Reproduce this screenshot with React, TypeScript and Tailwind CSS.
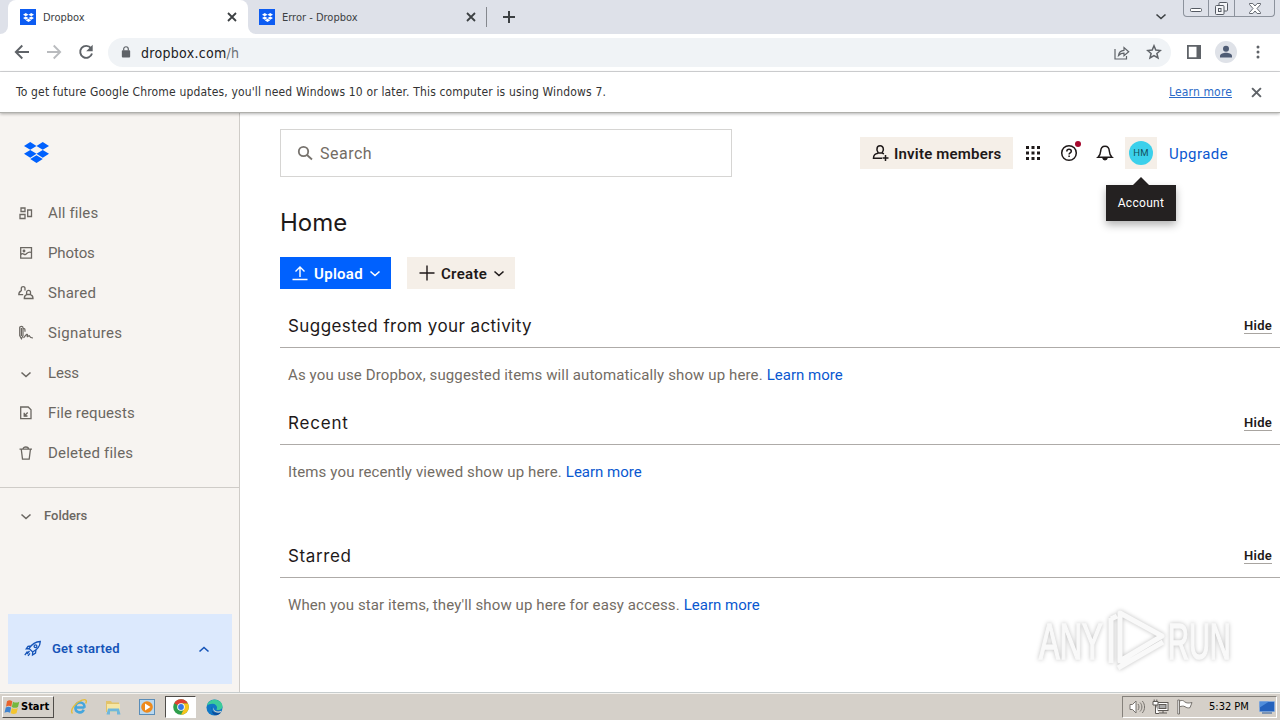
import React from "react";
import clsx from "clsx";

interface IconProps {
  className?: string;
}

interface NavItem {
  label: string;
  icon: React.ReactNode;
  tracking: string;
}

interface Section {
  title: string;
  text: string;
  titleClass: string;
  textClass: string;
  gap: string;
}

const DropboxGlyph = ({ className }: IconProps) => (
  <svg viewBox="0 0 24 20.4" className={className} fill="currentColor" preserveAspectRatio="none">
    <path d="M6 0 0 3.8l6 3.8 6-3.8zM18 0l-6 3.8 6 3.8 6-3.8zM0 11.5l6 3.8 6-3.8-6-3.8zM18 7.7l-6 3.8 6 3.8 6-3.8zM6 16.6l6 3.8 6-3.8-6-3.8z" />
  </svg>
);

const Chevron = ({ className }: IconProps) => (
  <svg viewBox="0 0 12 8" className={className} fill="none" stroke="currentColor" strokeWidth="1.6">
    <path d="m1.5 1.5 4.5 4 4.5-4" />
  </svg>
);

const Cross = ({ className }: IconProps) => (
  <svg viewBox="0 0 10 10" className={className} fill="none" stroke="currentColor" strokeWidth="1.8">
    <path d="m1 1 8 8M9 1 1 9" />
  </svg>
);

const navSvg = "h-4 w-4 shrink-0";

const navItems: NavItem[] = [
  {
    label: "All files",
    tracking: "tracking-[0.15px]",
    icon: (
      <svg viewBox="0 0 16 16" className={navSvg} fill="none" stroke="currentColor" strokeWidth="1.3">
        <path d="M3 3h4v3.500H3zM2 9.500h5v4H2zM9.700 5h3.800v6.500H9.700z" />
      </svg>
    ),
  },
  {
    label: "Photos",
    tracking: "-tracking-[0.1px]",
    icon: (
      <svg viewBox="0 0 16 16" className={navSvg} fill="none" stroke="currentColor" strokeWidth="1.3">
        <path d="M2.700 2.700h10.800v10.500H2.700zM3 9.500c2-2.500 3 .8 4.500 0s2.500-3.500 6-2" />
        <circle cx="6" cy="6" r=".8" fill="currentColor" />
      </svg>
    ),
  },
  {
    label: "Shared",
    tracking: "tracking-[0.25px]",
    icon: (
      <svg viewBox="0 0 16 16" className={navSvg} fill="none" stroke="currentColor" strokeWidth="1.3">
        <path d="M3.300 6V3.500c0-2.500 3.700-2.500 3.700 0v2M3.300 6C1.500 6.500.8 7.500.8 9.700h4.400M8.600 9.500V7.300c0-2.500 3.900-2.500 3.900 0v2.200zM8.600 9.700C7 10.300 6.300 11.300 6.300 13.500h8.700c0-2.200-.7-3.200-2.500-3.800" />
      </svg>
    ),
  },
  {
    label: "Signatures",
    tracking: "tracking-[0.3px]",
    icon: (
      <svg viewBox="0 0 16 16" className={navSvg} fill="none" stroke="currentColor" strokeWidth="1.2">
        <path d="M1.700 2.500C1.700 1 5 1 5 2.500v8L3.400 13.700 1.700 10.500zM3.400 3v8M5.300 3.700c1.700-.5 1.700.5 1.700 3M5.500 13c3-4 4.500-5 3.800-2-.4 1.800 1.500-.8 2-.3.500.5.300 2.300 3.700 2.300" />
      </svg>
    ),
  },
  {
    label: "Less",
    tracking: "tracking-[-0.2px]",
    icon: (
      <span className="flex h-4 w-4 items-center justify-center pt-[3px]">
        <Chevron className="h-[8px] w-[12px]" />
      </span>
    ),
  },
  {
    label: "File requests",
    tracking: "tracking-[0.12px]",
    icon: (
      <svg viewBox="0 0 16 16" className={navSvg} fill="none" stroke="currentColor" strokeWidth="1.3">
        <path d="M2.700 2h7.500l2.800 2.800v8.900H2.700zM9.700 7.500 6.500 10.700M6.200 7.700V11h3.300" />
        <path d="M6 8v3.200h3.200z" fill="currentColor" stroke="none" />
      </svg>
    ),
  },
  {
    label: "Deleted files",
    tracking: "tracking-[0.2px]",
    icon: (
      <svg viewBox="0 0 16 16" className={navSvg} fill="none" stroke="currentColor" strokeWidth="1.3">
        <path d="M1.500 4.200h12.500M5 4c0-2.700 5.500-2.700 5.500 0M3.300 4.500l1.200 9.700h6.700l1.200-9.700" />
      </svg>
    ),
  },
];

const sections: Section[] = [
  {
    title: "Suggested from your activity",
    text: "As you use Dropbox, suggested items will automatically show up here.",
    titleClass: "tracking-[0.42px]",
    textClass: "tracking-[0.12px]",
    gap: "mb-[3px]",
  },
  {
    title: "Recent",
    text: "Items you recently viewed show up here.",
    titleClass: "tracking-[0.8px]",
    textClass: "tracking-[0.13px]",
    gap: "mb-[39px]",
  },
  {
    title: "Starred",
    text: "When you star items, they'll show up here for easy access.",
    titleClass: "tracking-[0.6px]",
    textClass: "tracking-[0.1px]",
    gap: "",
  },
];

const Favicon = () => (
  <span className="flex h-4 w-4 shrink-0 items-center justify-center bg-[#0d5cf2] text-white">
    <DropboxGlyph className="h-[9px] w-[11px]" />
  </span>
);

const TabStrip = () => (
  <div className="flex h-[34px] bg-[#dee1e9] text-[11px] text-[#3c4043]">
    <div className="flex h-[34px] w-2 shrink-0 bg-white">
      <div className="w-full rounded-br-lg bg-[#dee1e9]" />
    </div>
    <div className="flex w-[240px] shrink-0 items-center rounded-t-lg bg-white pl-3">
      <Favicon />
      <span className="ml-[7px] w-[184px] pt-[2px]">Dropbox</span>
      <Cross className="h-[10px] w-[10px]" />
    </div>
    <div className="flex h-[34px] w-2 shrink-0 bg-white">
      <div className="w-full rounded-bl-lg bg-[#dee1e9]" />
    </div>
    <div className="flex w-[230px] shrink-0 items-center pl-[3px]">
      <Favicon />
      <span className="ml-[7px] w-[184px] pt-[2px]">Error - Dropbox</span>
      <Cross className="h-[10px] w-[10px]" />
    </div>
    <div className="mt-[7px] h-5 w-px bg-[#85888e]" />
    <svg viewBox="0 0 12 12" className="mt-[11px] ml-4 h-3 w-3" stroke="#3c4043" strokeWidth="2">
      <path d="M6 0v12M0 6h12" />
    </svg>
    <div className="ml-auto flex pr-[5px]">
      <Chevron className="mt-[13px] mr-[16px] h-[8px] w-[12px]" />
      <div className="flex h-[17px] w-[92px] rounded-b-[4px] border border-t-0 border-[#8c929c] text-[#555a63]">
        <div className="flex w-[25px] items-center justify-center border-r border-[#8c929c]">
          <svg viewBox="0 0 12 4" className="mt-1 h-1 w-3" fill="#fff" stroke="currentColor">
            <rect x=".5" y=".5" width="11" height="3" rx="1" />
          </svg>
        </div>
        <div className="flex w-[26px] items-center justify-center border-r border-[#8c929c]">
          <svg viewBox="0 0 13 13" className="h-[13px] w-[13px]" fill="#f4f5f8" stroke="currentColor">
            <rect x="4" y=".5" width="8.500" height="8.500" rx="1" />
            <rect x=".5" y="3.500" width="8.500" height="9" rx="1" />
            <rect x="3.500" y="6.500" width="2.500" height="3" />
          </svg>
        </div>
        <div className="flex flex-1 items-center justify-center">
          <svg viewBox="0 0 12 11" className="h-[11px] w-3" fill="#fff" stroke="currentColor" strokeWidth=".9">
            <path d="M.5.500h3.300L6 3 8.200.500h3.300v1L8 5.500l3.500 4v1H8.200L6 8l-2.200 2.500H.500v-1L4 5.500l-3.500-4z" />
          </svg>
        </div>
      </div>
    </div>
  </div>
);

const Toolbar = () => (
  <div className="flex h-[38px] items-center border-b border-[#d5d6d8] bg-white text-[#5f6368]">
    <svg viewBox="0 0 16 16" className="mb-px ml-[14px] h-4 w-4" fill="none" stroke="currentColor" strokeWidth="1.9">
      <path d="M15 8H2M8.300 1.500 1.800 8l6.500 6.500" />
    </svg>
    <svg viewBox="0 0 16 16" className="mb-px ml-4 h-4 w-4" fill="none" stroke="#b9bbbe" strokeWidth="1.8">
      <path d="M1 8h13M7.700 1.500 14.200 8l-6.500 6.500" />
    </svg>
    <svg viewBox="0 0 16 16" className="mb-px ml-4 h-4 w-4" fill="none" stroke="currentColor" strokeWidth="1.9">
      <path d="M13 4.200A6 6 0 1 0 14 9.500" />
      <path d="M14.700.8v6.500H8.200z" fill="currentColor" stroke="none" />
    </svg>
    <div className="ml-[14px] flex h-[29px] w-[1063px] items-center rounded-full bg-[#f0f3f6]">
      <svg viewBox="0 0 10 13" className="mb-[2px] ml-[13px] h-[12px] w-[10px]">
        <rect x=".5" y="4.500" width="9" height="8" rx="1" fill="#5f6368" />
        <path d="M2.500 5V3.300a2.500 2.500 0 0 1 5 0V5" fill="none" stroke="#5f6368" strokeWidth="1.300" />
      </svg>
      <span className="ml-[10px] pt-px text-[14px] tracking-[0.3px] text-[#202124]">
        dropbox.com<span className="text-[#6d7176]">/h</span>
      </span>
      <svg viewBox="0 0 16 14" className="ml-auto h-[14px] w-4" fill="none" stroke="currentColor" strokeWidth="1.2">
        <path d="M1 3v10h11.500v-3M4.500 9.500C5 6 7 4.500 10 4.300V1.500l4.700 4.200L10 9.800V7.200C7.500 7.200 6 8 4.500 9.500z" />
      </svg>
      <svg viewBox="0 0 16 16" className="mr-[9px] mb-px ml-4 h-4 w-4" fill="none" stroke="currentColor" strokeWidth="1.500">
        <path d="m8 1.800 1.800 4.300 4.600.4-3.500 3 1.100 4.500L8 11.600 4 14l1.100-4.500-3.500-3 4.600-.4z" />
      </svg>
    </div>
    <svg viewBox="0 0 14 14" className="mb-px ml-4 h-[14px] w-[14px]" fill="none" stroke="currentColor" strokeWidth="1.800">
      <path d="M.9.900h12.200v12.200H.9z" />
      <path d="M9.500 1h4v12h-4z" fill="currentColor" stroke="none" />
    </svg>
    <svg viewBox="0 0 22 22" className="mb-px ml-[14px] h-[22px] w-[22px]">
      <circle cx="11" cy="11" r="11" fill="#dfe2e8" />
      <circle cx="11" cy="7.800" r="3" fill="#4f5c74" />
      <path d="M5 16.500v-1.500c0-2 3.500-3.200 6-3.200s6 1.200 6 3.200v1.500z" fill="#4f5c74" />
    </svg>
    <svg viewBox="0 0 4 14" className="mb-px ml-[19px] h-[14px] w-1" fill="currentColor">
      <circle cx="2" cy="2" r="1.500" />
      <circle cx="2" cy="7" r="1.500" />
      <circle cx="2" cy="12" r="1.500" />
    </svg>
  </div>
);

const InfoBar = () => (
  <div className="relative z-10 flex h-[41px] items-center border-b border-[#b0b0ac] bg-white pl-4 text-[12px] text-[#333] shadow-[0_1px_3px_rgba(0,0,0,0.3)]">
    <span className="tracking-[0.16px] whitespace-nowrap">
      To get future Google Chrome updates, you'll need Windows 10 or later. This computer is using Windows 7.
    </span>
    <a className="mr-[19px] ml-auto tracking-[0.15px] text-[#2a6ac8] underline">Learn more</a>
    <Cross className="mr-[18px] h-[11px] w-[11px] text-[#5f6368]" />
  </div>
);

const Sidebar = () => (
  <aside className="flex w-[240px] shrink-0 flex-col border-r border-[#cfccc8] bg-[#f7f4f1] text-[#6b6762]">
    <DropboxGlyph className="mt-[29px] ml-[23.500px] h-[21px] w-[25px] text-[#0061fe]" />
    <nav className="mt-[30px] flex flex-col">
      {navItems.map((item) => (
        <a key={item.label} className="flex h-10 items-center pl-[18px] text-[15px]">
          {item.icon}
          <span className={clsx("ml-[14px]", item.tracking)}>{item.label}</span>
        </a>
      ))}
    </nav>
    <div className="mt-[14px] h-px bg-[#cfccc8]" />
    <div className="flex h-[56px] items-center pl-5 text-[13px] font-medium">
      <Chevron className="mt-px h-[8px] w-[12px]" />
      <span className="ml-3">Folders</span>
    </div>
    <div className="mx-2 mt-auto mb-2 flex h-[70px] w-[224px] items-center bg-[#dce9fd] pl-4 text-[13px] font-semibold text-[#1554b8]">
      <svg viewBox="0 0 18 18" className="h-[18px] w-[18px]" fill="none" stroke="currentColor" strokeWidth="1.300">
        <path d="M5 8.500C8 4 11 1.700 16.300 1.500 16 6.500 13.500 9.500 8.700 12zM7 6 4 6.300 2.300 8.700l2.700-.2M12 10l-.5 3-3 2 .2-3M3.500 11.500.8 15.200M6 13.300l-2 2.500M5.500 11 3 14" />
        <circle cx="11.500" cy="6.300" r="1.400" />
      </svg>
      <span className="ml-[10px] tracking-[0.25px]">Get started</span>
      <Chevron className="mr-[22px] ml-auto h-[8px] w-[12px] rotate-180" />
    </div>
  </aside>
);

const PageHeader = () => (
  <header className="flex h-12 items-center text-[#1e1919]">
    <div className="flex h-12 w-[452px] items-center border border-[#d6d5d3] pl-4 text-[16px] text-[#736c64]">
      <svg viewBox="0 0 16 16" className="h-4 w-4" fill="none" stroke="#77736e" strokeWidth="1.800">
        <circle cx="6.500" cy="6.500" r="4.700" />
        <path d="m10 10 5 4.500" />
      </svg>
      <span className="ml-[7px] pt-px tracking-[0.5px]">Search</span>
    </div>
    <button className="ml-[128px] flex h-8 w-[153px] items-center bg-[#f5efe8] pl-3 text-[15px] font-semibold">
      <svg viewBox="0 0 18 18" className="h-[18px] w-[18px]" fill="none" stroke="currentColor" strokeWidth="1.500">
        <path d="M5 6.200V5c0-4.300 6.300-4.300 6.300 0v1.200L10 9H6.300zM6 9.300C3 10 1.500 10.700 1.500 14.300H10M10.500 9.300l1.500.6M13.500 11v6M10.500 14h6" />
      </svg>
      <span className="ml-1 pt-[2px] tracking-[0.2px] whitespace-nowrap">Invite members</span>
    </button>
    <svg viewBox="0 0 14 14" className="ml-[13px] h-[14px] w-[14px]" fill="currentColor">
      <path d="M0 0h3v3H0zM5.500 0h3v3h-3zM11 0h3v3h-3zM0 5.500h3v3H0zM5.500 5.500h3v3h-3zM11 5.500h3v3h-3zM0 11h3v3H0zM5.500 11h3v3h-3zM11 11h3v3h-3z" />
    </svg>
    <div className="relative ml-5 h-[18px] w-[18px]">
      <svg viewBox="0 0 18 18" className="h-[18px] w-[18px]" fill="none" stroke="currentColor" strokeWidth="1.500">
        <circle cx="9" cy="9" r="7.300" />
        <path d="M6.800 7.500c0-3 4.500-2.700 4.500-.3 0 1.700-2.200 1.500-2.200 3.200M9.100 11.500v1.600" />
      </svg>
      <span className="absolute -top-[3px] left-[15px] h-[6px] w-[6px] rounded-full bg-[#a5082d]" />
    </div>
    <svg viewBox="0 0 18 18" className="ml-[18px] h-[18px] w-[18px]" fill="none" stroke="currentColor" strokeWidth="1.500">
      <path d="M2 13.200c2-1.700 2.500-3.200 2.700-6.200C5 .5 13 .5 13.300 7c.2 3 .7 4.500 2.700 6.200z" />
      <path d="M7 14.200c.3 2 3.700 2 4 0z" fill="currentColor" />
    </svg>
    <div className="relative ml-[11px] flex h-8 w-8 items-center justify-center bg-[#f5efe8]">
      <span className="flex h-6 w-6 items-center justify-center rounded-full bg-[#3bd0eb] text-[9.500px] tracking-[0.3px] text-[#14505f]">
        HM
      </span>
      <div className="absolute top-10 left-1/2 flex w-[70px] -translate-x-1/2 flex-col items-center">
        <svg viewBox="0 0 16 8" className="h-2 w-4" fill="#242121">
          <path d="m8 0 8 8H0z" />
        </svg>
        <span className="flex h-9 w-full items-center justify-center bg-[#242121] text-[12px] tracking-[0.3px] text-white shadow-[0_4px_8px_rgba(0,0,0,0.3)]">
          Account
        </span>
      </div>
    </div>
    <a className="ml-3 pt-[2px] text-[15px] tracking-[0.45px] text-[#0a58d0]">Upgrade</a>
  </header>
);

const Main = () => (
  <main className="relative flex flex-1 flex-col overflow-hidden bg-white pt-4 pl-10">
    <PageHeader />
    <h1 className="mt-[30px] h-8 font-['Inter'] text-[24px] leading-8 text-[#1e1919]">Home</h1>
    <div className="mt-[18px] flex h-8 gap-4 text-[15px] font-semibold">
      <button className="flex h-8 w-[111px] items-center bg-[#0061fe] pl-3 text-white">
        <svg viewBox="0 0 16 16" className="h-4 w-4" fill="none" stroke="currentColor" strokeWidth="1.400">
          <path d="M8 12V2M3.500 6.500 8 2l4.500 4.500M.5 14.500h15" />
        </svg>
        <span className="ml-[6px] pt-[2px] tracking-[0.3px]">Upload</span>
        <Chevron className="mt-px ml-[6px] h-[8px] w-[12px]" />
      </button>
      <button className="flex h-8 w-[108px] items-center bg-[#f5efe8] pl-3 text-[#1e1919]">
        <svg viewBox="0 0 16 16" className="h-4 w-4" fill="none" stroke="currentColor" strokeWidth="1.400">
          <path d="M8 .5v15M.5 8h15" />
        </svg>
        <span className="ml-[6px] pt-[2px] tracking-[0.3px]">Create</span>
        <Chevron className="mt-px ml-[6px] h-[8px] w-[12px]" />
      </button>
    </div>
    <div className="mt-[19px] flex flex-col">
      {sections.map((section) => (
        <section key={section.title} className={section.gap}>
          <div className="flex h-10 items-center justify-between border-b border-[#aeaba8] px-2 pb-[3px]">
            <h2 className={clsx("pt-[2px] font-['Inter'] text-[17px] text-[#1e1919]", section.titleClass)}>
              {section.title}
            </h2>
            <button className="h-4 border-b border-[#a8a4a0] text-[13px] leading-4 font-semibold tracking-[0.25px] text-[#1e1919]">
              Hide
            </button>
          </div>
          <p className="flex h-[54px] items-center pl-2 text-[15px] text-[#736c64]">
            <span className={section.textClass}>{section.text}</span>
            <a className="ml-1 text-[#0a58d0]">Learn more</a>
          </p>
        </section>
      ))}
    </div>
    <Watermark />
  </main>
);

const Watermark = () => (
  <svg
    viewBox="-4 0 204 70"
    className="absolute right-[42px] bottom-[13px] h-[70px] w-[204px] drop-shadow-[0_0_2px_rgba(0,0,0,0.25)]"
    fill="#f9f9f9"
  >
    <g fontFamily="Liberation Sans, sans-serif" fontSize="50" stroke="#f9f9f9" strokeWidth="1.5">
      <text transform="translate(1 50) scale(.62 1)">ANY</text>
      <text transform="translate(130 50) scale(.58 1)">RUN</text>
    </g>
    <g fill="none" stroke="#f9f9f9" strokeWidth="5" strokeLinejoin="round">
      <path d="M82 4v48l42-25zM73 9v45M79 7l-6 3M80 59l45-26" />
    </g>
  </svg>
);

const Taskbar = () => (
  <div className="flex h-7 items-center border-t border-[#c7cdce] bg-[#d5d0c9] pt-[3px] pb-[2px] text-[11px] text-black shadow-[inset_0_1px_0_#f5f3ef]">
    <button className="ml-[2px] flex h-[22px] w-[52px] items-center border border-t-white border-r-[#504d49] border-b-[#504d49] border-l-white pl-px font-bold">
      <svg viewBox="0 0 16 16" className="h-4 w-4 shrink-0">
        <path d="M3 2.300q2.500-2 5.300 0L7.300 7.700q-2.500-1.700-5.300 0z" fill="#e8632c" />
        <path d="M9 2.700q3 1.700 6.300 0L14 8q-3 1.700-6.200 0z" fill="#75b83e" />
        <path d="M1.800 8.500q2.500-1.700 5.300 0l-1 5.300q-2.800-1.700-5.600 0z" fill="#3f83cf" />
        <path d="M7.800 9q2.900 1.700 6 0l-1.300 5.300q-3 1.500-5.800 0z" fill="#f4c52f" />
      </svg>
      <span className="ml-px">Start</span>
    </button>
    <svg viewBox="0 0 18 18" className="ml-4 h-[18px] w-[18px]" fill="none">
      <path d="M14.500 9.500H5.500a4.300 4.300 0 0 0 8.200 2.300M5.500 8.500a4.400 4.400 0 0 1 9 1" stroke="#45a6dd" strokeWidth="2.600" />
      <path d="M2.500 15.500C-.5 12 5.500 4.500 12 2.200c4-1.500 5.200.3 3.700 3.300" stroke="#e5bd3b" strokeWidth="1.400" />
    </svg>
    <svg viewBox="0 0 18 18" className="ml-4 h-[18px] w-[18px]">
      <path d="M2 3h5l1 1.500h7V14H2z" fill="#e2c36b" />
      <path d="M3 6h13v8H3z" fill="#f6e6a4" />
      <path d="M4 10.500h11l1.500 6H13v-3H6v3H2.500z" fill="#6fb7dc" />
    </svg>
    <svg viewBox="0 0 18 18" className="ml-4 h-[18px] w-[18px]">
      <rect x="1.500" y="1.500" width="15" height="15" fill="#b9d8f0" stroke="#5a8db8" />
      <circle cx="9" cy="9" r="5.800" fill="#ee8a1c" />
      <path d="M7 5.500 12.500 9 7 12.500z" fill="#fff" />
    </svg>
    <div className="ml-[9px] flex h-[22px] w-[31px] items-center justify-center border border-t-[#504d49] border-r-white border-b-white border-l-[#504d49] bg-white">
      <svg viewBox="0 0 16 16" className="h-4 w-4">
        <circle cx="8" cy="8" r="7.800" fill="#2f9e4b" />
        <path d="M8 8 1.200 4.200A7.800 7.800 0 0 1 15 4.500H8z" fill="#df4032" />
        <path d="M8 4.500h7A7.800 7.800 0 0 1 8 15.800L11.500 9z" fill="#f8c41c" />
        <circle cx="8" cy="8" r="3.800" fill="#fff" />
        <circle cx="8" cy="8" r="2.900" fill="#3478e5" />
      </svg>
    </div>
    <svg viewBox="0 0 18 18" className="ml-[10px] h-[17px] w-[17px]">
      <circle cx="9" cy="9" r="8.500" fill="#1177c5" />
      <path d="M1 7C3-1.500 17-1 17.500 8c0 3.500-4.500 4.500-6.500 3 2-2.500-.5-6-4-6C4.500 5 2 6 1 7z" fill="#3ccb9b" />
      <path d="M6.500 8c-2.500 4 1.500 8 9.500 6C12 19.500 4 18 6.500 8z" fill="#0c4f9e" />
      <path d="M8 9c0 4 4 5 8.500 3.500L15.800 14C11 15.500 6.500 13 8 9z" fill="#d5d0c9" />
    </svg>
    <div className="mr-[3px] ml-auto flex h-[22px] w-[155px] items-center border border-t-[#85817b] border-r-white border-b-white border-l-[#85817b] pl-[5px]">
      <svg viewBox="0 0 18 16" className="h-4 w-[18px]" fill="#fff" stroke="#77736e">
        <path d="M2 5.500h2.500L8 2v12l-3.500-3.500H2z" />
        <path
          d="M10 5c1.300 1.800 1.300 4.200 0 6M12 3.500c2.500 2.500 2.500 6.500 0 9M14.300 2c3 3.500 3 8.500 0 12"
          fill="none"
        />
      </svg>
      <svg viewBox="0 0 17 16" className="ml-[6px] h-4 w-[17px]" fill="#fff" stroke="#5d5955">
        <rect x="5" y="3.500" width="11" height="8" />
        <rect x="7" y="5.500" width="7" height="4" fill="#aaa" />
        <path d="M7 14h8M11 12v2M1 2.500h5v3.500H1zM2.200.5v2M4.800.5v2M3.500 6v8.500H7" />
      </svg>
      <svg viewBox="0 0 16 16" className="ml-[8px] h-4 w-4" fill="#fff" stroke="#77736e">
        <path d="M.8 1h1.700v14H.8zM2.500 2C5 1 6.500 1.500 7.500 2.700c2 1.700 4.500 1.500 7.500.8L13 8.700c-2 .5-3.500 0-5-1s-3.500-.5-5.500 0z" />
      </svg>
      <span className="ml-[16px] w-[50px] text-[11px] whitespace-nowrap">5:32 PM</span>
      <svg viewBox="0 0 16 13" className="h-[13px] w-4">
        <rect width="16" height="11" fill="#9dbbe0" />
        <rect x=".8" y=".8" width="14.400" height="9.500" fill="#2462bd" />
        <path d="M.8.800h9L.8 6.500z" fill="#4f8ddb" />
        <path d="M3 12h10" stroke="#6080a8" strokeWidth="1.500" />
      </svg>
    </div>
  </div>
);

const App = () => {
  return (
    <div className="flex h-[720px] w-[1280px] flex-col overflow-hidden bg-white font-['Roboto','Liberation_Sans',sans-serif]">
      <div className="font-['DejaVu_Sans_Condensed','Noto_Sans',sans-serif]">
        <TabStrip />
        <Toolbar />
        <InfoBar />
      </div>
      <div className="flex min-h-0 flex-1">
        <Sidebar />
        <Main />
      </div>
      <div className="font-['DejaVu_Sans_Condensed','Noto_Sans',sans-serif]">
        <Taskbar />
      </div>
    </div>
  );
};

export default App;
